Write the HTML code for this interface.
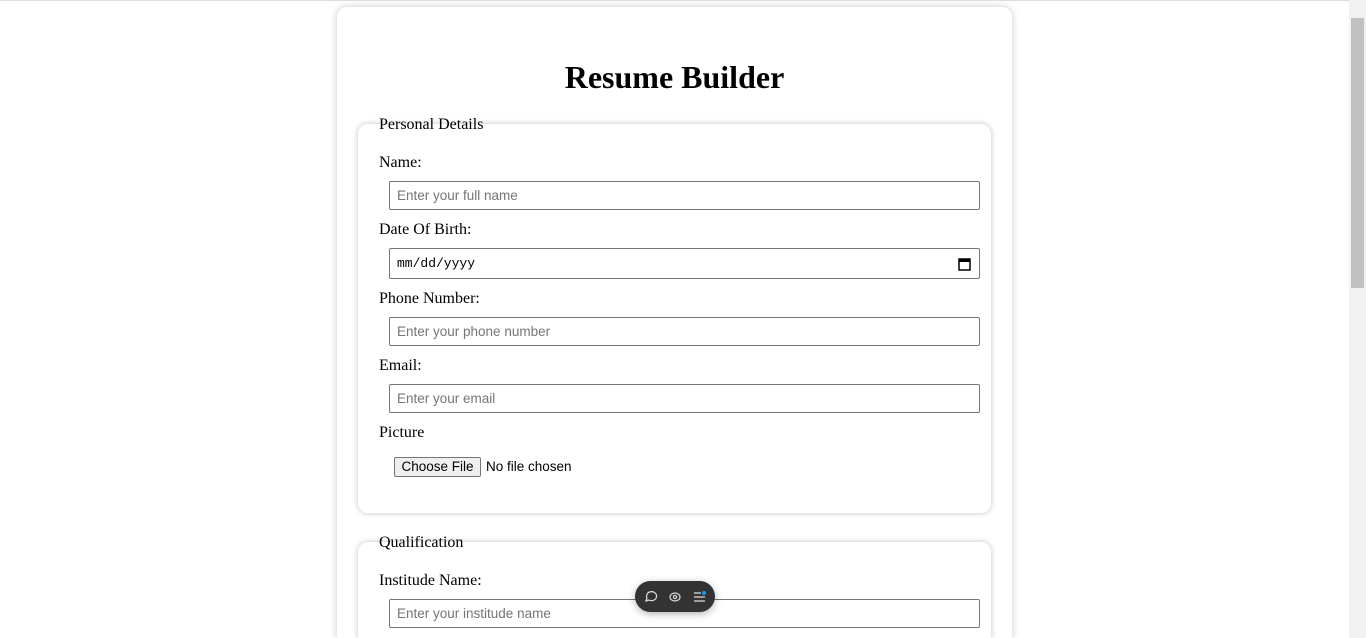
<!DOCTYPE html>
<html style="overflow:hidden;height:638px"><head><style>
html,body{margin:0;padding:0;}
body{width:1366px;height:638px;overflow:hidden;position:relative;background:#fff;font-family:"Liberation Serif",serif;font-size:16px;color:#000}
.a{position:absolute}
.card{left:337px;top:7px;width:675px;height:641px;border-radius:10px 10px 0 0;background:#fff;box-shadow:0 0 8px rgba(0,0,0,.22)}
.fs{left:358px;width:633px;border-radius:10px;background:#fff;box-shadow:0 0 6px rgba(0,0,0,.25)}
.lbl{left:379px;line-height:18px}
.inp{left:389px;width:591px;height:29px;box-sizing:border-box;border:1px solid #767676;border-radius:2px;background:#fff;font-family:"Liberation Sans",sans-serif;font-size:13.5px;color:#757575;padding-left:7px;line-height:27px}
h1{position:absolute;left:337px;width:675px;top:59px;margin:0;text-align:center;font-size:32px;line-height:37px;font-weight:bold}
</style></head><body>
<div class="a" style="left:0;top:0;width:1366px;height:1px;background:#ddd"></div>
<div class="a card" style="height:631px"></div>
<h1>Resume Builder</h1>
<div class="a fs" style="top:124px;height:389px"></div>
<div class="a lbl" style="top:116px">Personal Details</div>
<div class="a lbl" style="top:154px">Name:</div>
<div class="a inp" style="top:181px">Enter your full name</div>
<div class="a lbl" style="top:221px">Date Of Birth:</div>
<div class="a inp" style="top:248px;height:31px;line-height:29px;color:#000;font-family:'Liberation Mono',monospace;font-size:13px">mm/dd/yyyy
<svg style="position:absolute;right:8px;top:8px" width="13" height="14" viewBox="0 0 13 14"><rect x="1" y="2" width="11" height="11" fill="none" stroke="#000" stroke-width="1.5"/><rect x="1" y="2" width="11" height="3" fill="#000"/></svg></div>
<div class="a lbl" style="top:290px">Phone Number:</div>
<div class="a inp" style="top:317px">Enter your phone number</div>
<div class="a lbl" style="top:357px">Email:</div>
<div class="a inp" style="top:384px">Enter your email</div>
<div class="a lbl" style="top:424px">Picture</div>
<div class="a" style="left:394px;top:457px;width:87px;height:20px;box-sizing:border-box;border:1px solid #767676;border-radius:2px;background:#efefef;font-family:'Liberation Sans',sans-serif;font-size:13.5px;text-align:center;line-height:18px">Choose File</div>
<div class="a" style="left:486px;top:457px;font-family:'Liberation Sans',sans-serif;font-size:13.5px;line-height:19px">No file chosen</div>
<div class="a fs" style="top:542px;height:96px;border-radius:10px 10px 0 0"></div>
<div class="a lbl" style="top:534px">Qualification</div>
<div class="a lbl" style="top:572px">Institude Name:</div>
<div class="a inp" style="top:599px">Enter your institude name</div>
<div class="a" style="left:635px;top:581px;width:80px;height:31px;border-radius:16px;background:#333;box-shadow:0 2px 8px rgba(0,0,0,.3)">
<svg width="80" height="31" viewBox="0 0 80 31" fill="none" stroke="#ddd" stroke-width="1.2"><path d="M11 20 l1-3 a5 4.5 0 1 1 2 2 z"/><ellipse cx="40" cy="16" rx="5" ry="4"/><circle cx="40" cy="16" r="1.6"/><path d="M59 12h7M59 16h11M59 20h11"/><circle cx="69" cy="12" r="2" fill="#1a9bf0" stroke="none"/></svg></div>
<div class="a" style="left:1349px;top:0;width:17px;height:638px;background:#f1f1f1"></div>
<div class="a" style="left:1351px;top:18px;width:13px;height:270px;background:#c1c1c1"></div>
</body></html>
